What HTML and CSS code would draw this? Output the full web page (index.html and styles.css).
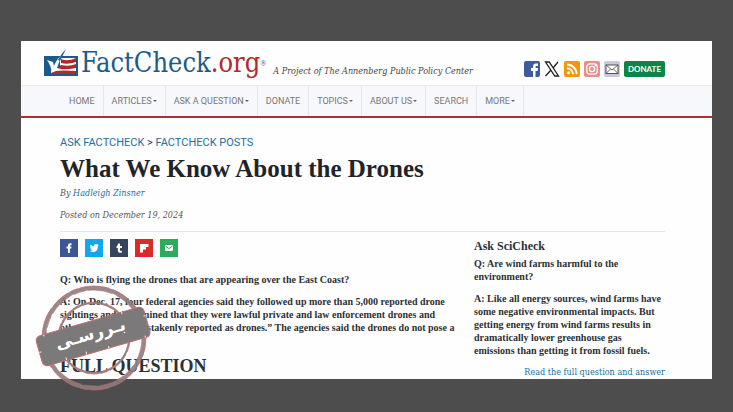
FILE: index.html
```html
<!DOCTYPE html>
<html lang="en">
<head>
    <meta charset="UTF-8">
    <meta name="viewport" content="width=device-width, initial-scale=1.0">
    <title>What We Know About the Drones - FactCheck.org</title>
    <link rel="stylesheet" href="styles.css">
</head>
<body>

    <div class="page">
        <header class="site-header">
            <a class="logo" href="#">
                <svg class="logo-flag" viewBox="0 0 34 28" aria-hidden="true">
                    <rect x="1" y="8" width="32" height="18" fill="#fff" stroke="#1d5a8c" stroke-width="2"/>
                    <path d="M1 8h15v11q-6 2-8 6H1z" fill="#1d5a8c"/>
                    <path d="M17 10q7 3 15-1v4q-8 3-15 1zM17 16q8 2 15-1v4q-9 2-19 1zM9 22q12-1 23 0v3H7z" fill="#b3282d"/>
                    <path d="M3 11l6 2 1 4Q13 9 19 5 15 12 13 19l4 1-10 4q1-6-4-13z" fill="#fff"/>
                    <path d="M14 11Q17 5 22 0 19 6 16 12z" fill="#1d5a8c"/>
                </svg>
                <span class="logo-text">FactCheck<span class="logo-org">.org</span></span><span class="logo-mark">®</span>
            </a>
            <span class="tagline">A Project of The Annenberg Public Policy Center</span>
            <div class="header-links">
                <a href="#" aria-label="Facebook">
                    <svg viewBox="0 0 16 16"><rect width="16" height="16" rx="2" fill="#3f5a9c"/><path d="M9 16V10H7V7h2V5.500Q9 2.500 12 2.500h2V5h-1.500Q11.500 5 11.500 6v1H14l-.4 3h-2.100v6z" fill="#fff"/></svg>
                </a>
                <a href="#" aria-label="X">
                    <svg viewBox="0 0 16 16"><path d="M1.500 1h3.700l9.300 14h-3.700zM14 1L9 7M7 9l-5.500 6" fill="none" stroke="#222" stroke-width="1.300"/></svg>
                </a>
                <a href="#" aria-label="RSS">
                    <svg viewBox="0 0 16 16"><rect width="16" height="16" rx="2" fill="#f0960f"/><circle cx="4.500" cy="11.800" r="1.500" fill="#fff"/><path d="M3 7.200a6 6 0 0 1 6 6M3 3.500a9.700 9.700 0 0 1 9.700 9.700" fill="none" stroke="#fff" stroke-width="1.900"/></svg>
                </a>
                <a href="#" aria-label="Instagram">
                    <svg viewBox="0 0 16 16"><rect width="16" height="16" rx="2" fill="#ea8d8b"/><rect x="2.800" y="2.800" width="10.400" height="10.400" rx="3" fill="none" stroke="#fff" stroke-width="1.200"/><circle cx="8" cy="8" r="2.600" fill="none" stroke="#fff" stroke-width="1.300"/><circle cx="11.200" cy="4.800" r=".8" fill="#fff"/></svg>
                </a>
                <a href="#" aria-label="Email">
                    <svg viewBox="0 0 16 16"><rect width="16" height="16" rx="2" fill="#c9c8dc"/><rect x="2" y="4" width="12" height="8.500" fill="#fff" stroke="#444" stroke-width=".9"/><path d="M2 4l6 5 6-5M2 12.500l4.500-4.500M14 12.500L9.500 8" fill="none" stroke="#444" stroke-width=".8"/></svg>
                </a>
                <a class="donate" href="#">DONATE</a>
            </div>
        </header>

        <nav class="main-nav">
            <a href="#">HOME</a>
            <a class="has-menu" href="#">ARTICLES</a>
            <a class="has-menu" href="#">ASK A QUESTION</a>
            <a href="#">DONATE</a>
            <a class="has-menu" href="#">TOPICS</a>
            <a class="has-menu" href="#">ABOUT US</a>
            <a href="#">SEARCH</a>
            <a class="has-menu" href="#">MORE</a>
        </nav>

        <main class="content">
            <div class="breadcrumbs"><a href="#">ASK FACTCHECK</a> &gt; <a href="#">FACTCHECK POSTS</a></div>
            <h1>What We Know About the Drones</h1>
            <p class="meta">By <a href="#">Hadleigh Zinsner</a></p>
            <p class="meta">Posted on December 19, 2024</p>

            <div class="columns">
                <article>
                    <div class="share">
                        <a class="facebook" href="#" aria-label="Share on Facebook">
                            <svg viewBox="0 0 18 18"><path d="M8 14V9.500H6.500V7.500H8V6.500Q8 4.200 10.200 4.200h1.300v2h-.9q-.7 0-.7.700v.6h1.600l-.2 2H9.900V14z"/></svg>
                        </a>
                        <a class="twitter" href="#" aria-label="Share on Twitter">
                            <svg viewBox="0 0 18 18"><path d="M5.500 5.500Q7 7.300 9 7.300 8.900 5 11 5q.9 0 1.400.6l1.200-.4-.7 1.100 1-.2-1 1.100Q12.800 13 8 13q-1.900 0-3.200-.9 1.700 0 2.500-.8-1.200-.1-1.600-1.200h.8Q5.100 9.700 5 8.200l.8.200Q4.600 7.200 5.500 5.500z"/></svg>
                        </a>
                        <a class="tumblr" href="#" aria-label="Share on Tumblr">
                            <svg viewBox="0 0 18 18"><path d="M8 4.500h2V7h2v1.900h-2v2.200q0 1.200 1.900.7v1.700Q7.800 14.700 7.800 11.500V8.900H6.500V7.400Q7.900 6.800 8 4.500z"/></svg>
                        </a>
                        <a class="flipboard" href="#" aria-label="Share on Flipboard">
                            <svg viewBox="0 0 18 18"><path d="M5 5h8.500v3H11v2.500H8V13.500H5z"/></svg>
                        </a>
                        <a class="email" href="#" aria-label="Share by email">
                            <svg viewBox="0 0 18 18"><rect x="5" y="6" width="8" height="6" rx="1.200"/><path d="M5.700 7.200L9 9.600l3.300-2.400" fill="none" stroke="#2bab5c"/></svg>
                        </a>
                    </div>
                    <p>Q: Who is flying the drones that are appearing over the East Coast?</p>
                    <p>A: On Dec. 17, four federal agencies said they followed up more than 5,000 reported drone<br>
                        sightings and determined that they were lawful private and law enforcement drones and<br>
                        other craft were “mistakenly reported as drones.” The agencies said the drones do not pose a</p>
                    <h2>FULL QUESTION</h2>
                </article>

                <aside>
                    <h3>Ask SciCheck</h3>
                    <p>Q: Are wind farms harmful to the<br>environment?</p>
                    <p>A: Like all energy sources, wind farms have<br>
                        some negative environmental impacts. But<br>
                        getting energy from wind farms results in<br>
                        dramatically lower greenhouse gas<br>
                        emissions than getting it from fossil fuels.</p>
                    <a class="read-more" href="#">Read the full question and answer</a>
                </aside>
            </div>
        </main>
    </div>

    <!-- Rubber stamp laid over the corner of the article -->
    <svg class="stamp" viewBox="0 0 120 110" role="img" aria-label="بررسی">
        <g fill="none">
            <circle cx="60" cy="55" r="50" stroke="#8d7d7d" stroke-width="4" opacity=".9"/>
            <circle cx="60" cy="55" r="52" stroke="#c96468" stroke-width=".7" stroke-dasharray="19 3 8 2 30 4"/>
            <circle cx="60" cy="55" r="48" stroke="#b9686b" stroke-width=".7" stroke-dasharray="25 4 12 3"/>
            <circle cx="60" cy="55" r="35" stroke="#958383" stroke-width="2"/>
            <circle cx="60" cy="55" r="36" stroke="#c96468" stroke-width=".7" stroke-dasharray="14 3 7 2"/>
        </g>
        <g transform="rotate(-16 59 53)">
            <rect x="3" y="38" width="112" height="31" rx="5" fill="#7b7979" stroke="#c06c6e"/>
            <path d="M12 38v2M27 69v-3M48 69v-3M71 69v-2M93 38v2M109 69v-2M3 54h2M115 48h-2" stroke="#eee"/>
            <text class="stamp-text" x="57" y="56" text-anchor="middle">بـررسـی</text>
        </g>
    </svg>

</body>
</html>
```
FILE: styles.css
```css
* {
    box-sizing: border-box;
}

body {
    margin: 0;
    height: 100vh;
    padding: 41px 21px 33px;
    background-color: #4d4d4d;
    color: #2c3135;
    font-family: "Liberation Serif", serif;
    font-size: 10px;
    line-height: 13px;
    overflow: hidden;
}

a {
    color: #246f9c;
    text-decoration: none;
}

.page {
    height: 100%;
    background-color: #fefefe;
    overflow: hidden;
}

.site-header {
    display: flex;
    align-items: center;
    height: 44px;
    padding: 0 47px 0 23px;
}

.logo {
    display: flex;
    align-items: center;
    color: #1d5a8c;
}

.logo-flag {
    width: 34px;
    height: 28px;
    margin-right: 3px;
}

.logo-text,
.tagline,
.meta,
.read-more {
    font-family: "DejaVu Serif Condensed", "DejaVu Serif", serif;
}

.logo-text {
    font-size: 27px;
    line-height: 44px;
}

.logo-org {
    color: #b3282d;
}

.logo-mark {
    font-size: 8px;
}

.tagline {
    padding: 17px 0 0 7px;
    color: #444;
    font-size: 9px;
    font-style: italic;
    white-space: nowrap;
}

.header-links {
    display: flex;
    align-items: center;
    gap: 4px;
    margin-left: auto;
    padding-top: 11px;
}

.header-links svg {
    display: block;
    width: 16px;
    height: 16px;
}

.donate {
    padding: 1px 4px;
    border-radius: 2px;
    background-color: #0e8449;
    color: #fff;
    font-family: Lato, sans-serif;
    font-size: 8px;
    font-weight: bold;
    line-height: 14px;
}

.main-nav {
    display: flex;
    height: 33px;
    padding-left: 40px;
    border-top: 1px solid #e8e9eb;
    border-bottom: 2px solid #ad2f35;
    background-color: #f7f8fb;
}

.main-nav a {
    display: flex;
    align-items: center;
    padding: 0 8px;
    border-right: 1px solid #e6e7ea;
    color: #777;
    font-family: Roboto, sans-serif;
    font-size: 9px;
    white-space: nowrap;
}

.has-menu::after {
    content: "";
    margin-left: 1px;
    border: 2px solid transparent;
    border-top-color: #666;
    border-bottom: 0;
}

.content {
    padding: 17px 47px 0 39px;
}

.breadcrumbs {
    font-family: Roboto, sans-serif;
    font-size: 11px;
    line-height: 16px;
}

h1 {
    margin: 0;
    color: #1f2429;
    font-size: 25px;
    line-height: 36px;
}

.meta {
    margin: 0 0 9px;
    color: #555;
    font-size: 9px;
    font-style: italic;
}

.columns {
    display: grid;
    grid-template-columns: 1fr 191px;
    border-top: 1px solid #e4e5e6;
    font-weight: bold;
    white-space: nowrap;
}

.columns p {
    margin: 0 0 9px;
}

.share {
    display: flex;
    gap: 7px;
    padding: 7px 0 16px;
}

.share svg {
    display: block;
    width: 18px;
    height: 18px;
    fill: #fff;
}

.facebook {
    background-color: #3b5796;
}

.twitter {
    background-color: #0fa8ec;
}

.tumblr {
    background-color: #34465d;
}

.flipboard {
    background-color: #e12828;
}

.email {
    background-color: #2bab5c;
}

h2 {
    margin: 20px 0 0;
    font-size: 18px;
    line-height: 24px;
}

h3 {
    margin: 6px 0 3px;
    font-size: 12px;
    line-height: 16px;
}

.read-more {
    display: block;
    font-size: 9px;
    font-weight: normal;
    text-align: right;
}

.stamp {
    position: absolute;
    left: 34px;
    top: 283px;
    width: 120px;
    height: 110px;
}

.stamp-text {
    fill: #fff;
    font-family: "DejaVu Sans", sans-serif;
    font-size: 17px;
    font-weight: bold;
}
```
